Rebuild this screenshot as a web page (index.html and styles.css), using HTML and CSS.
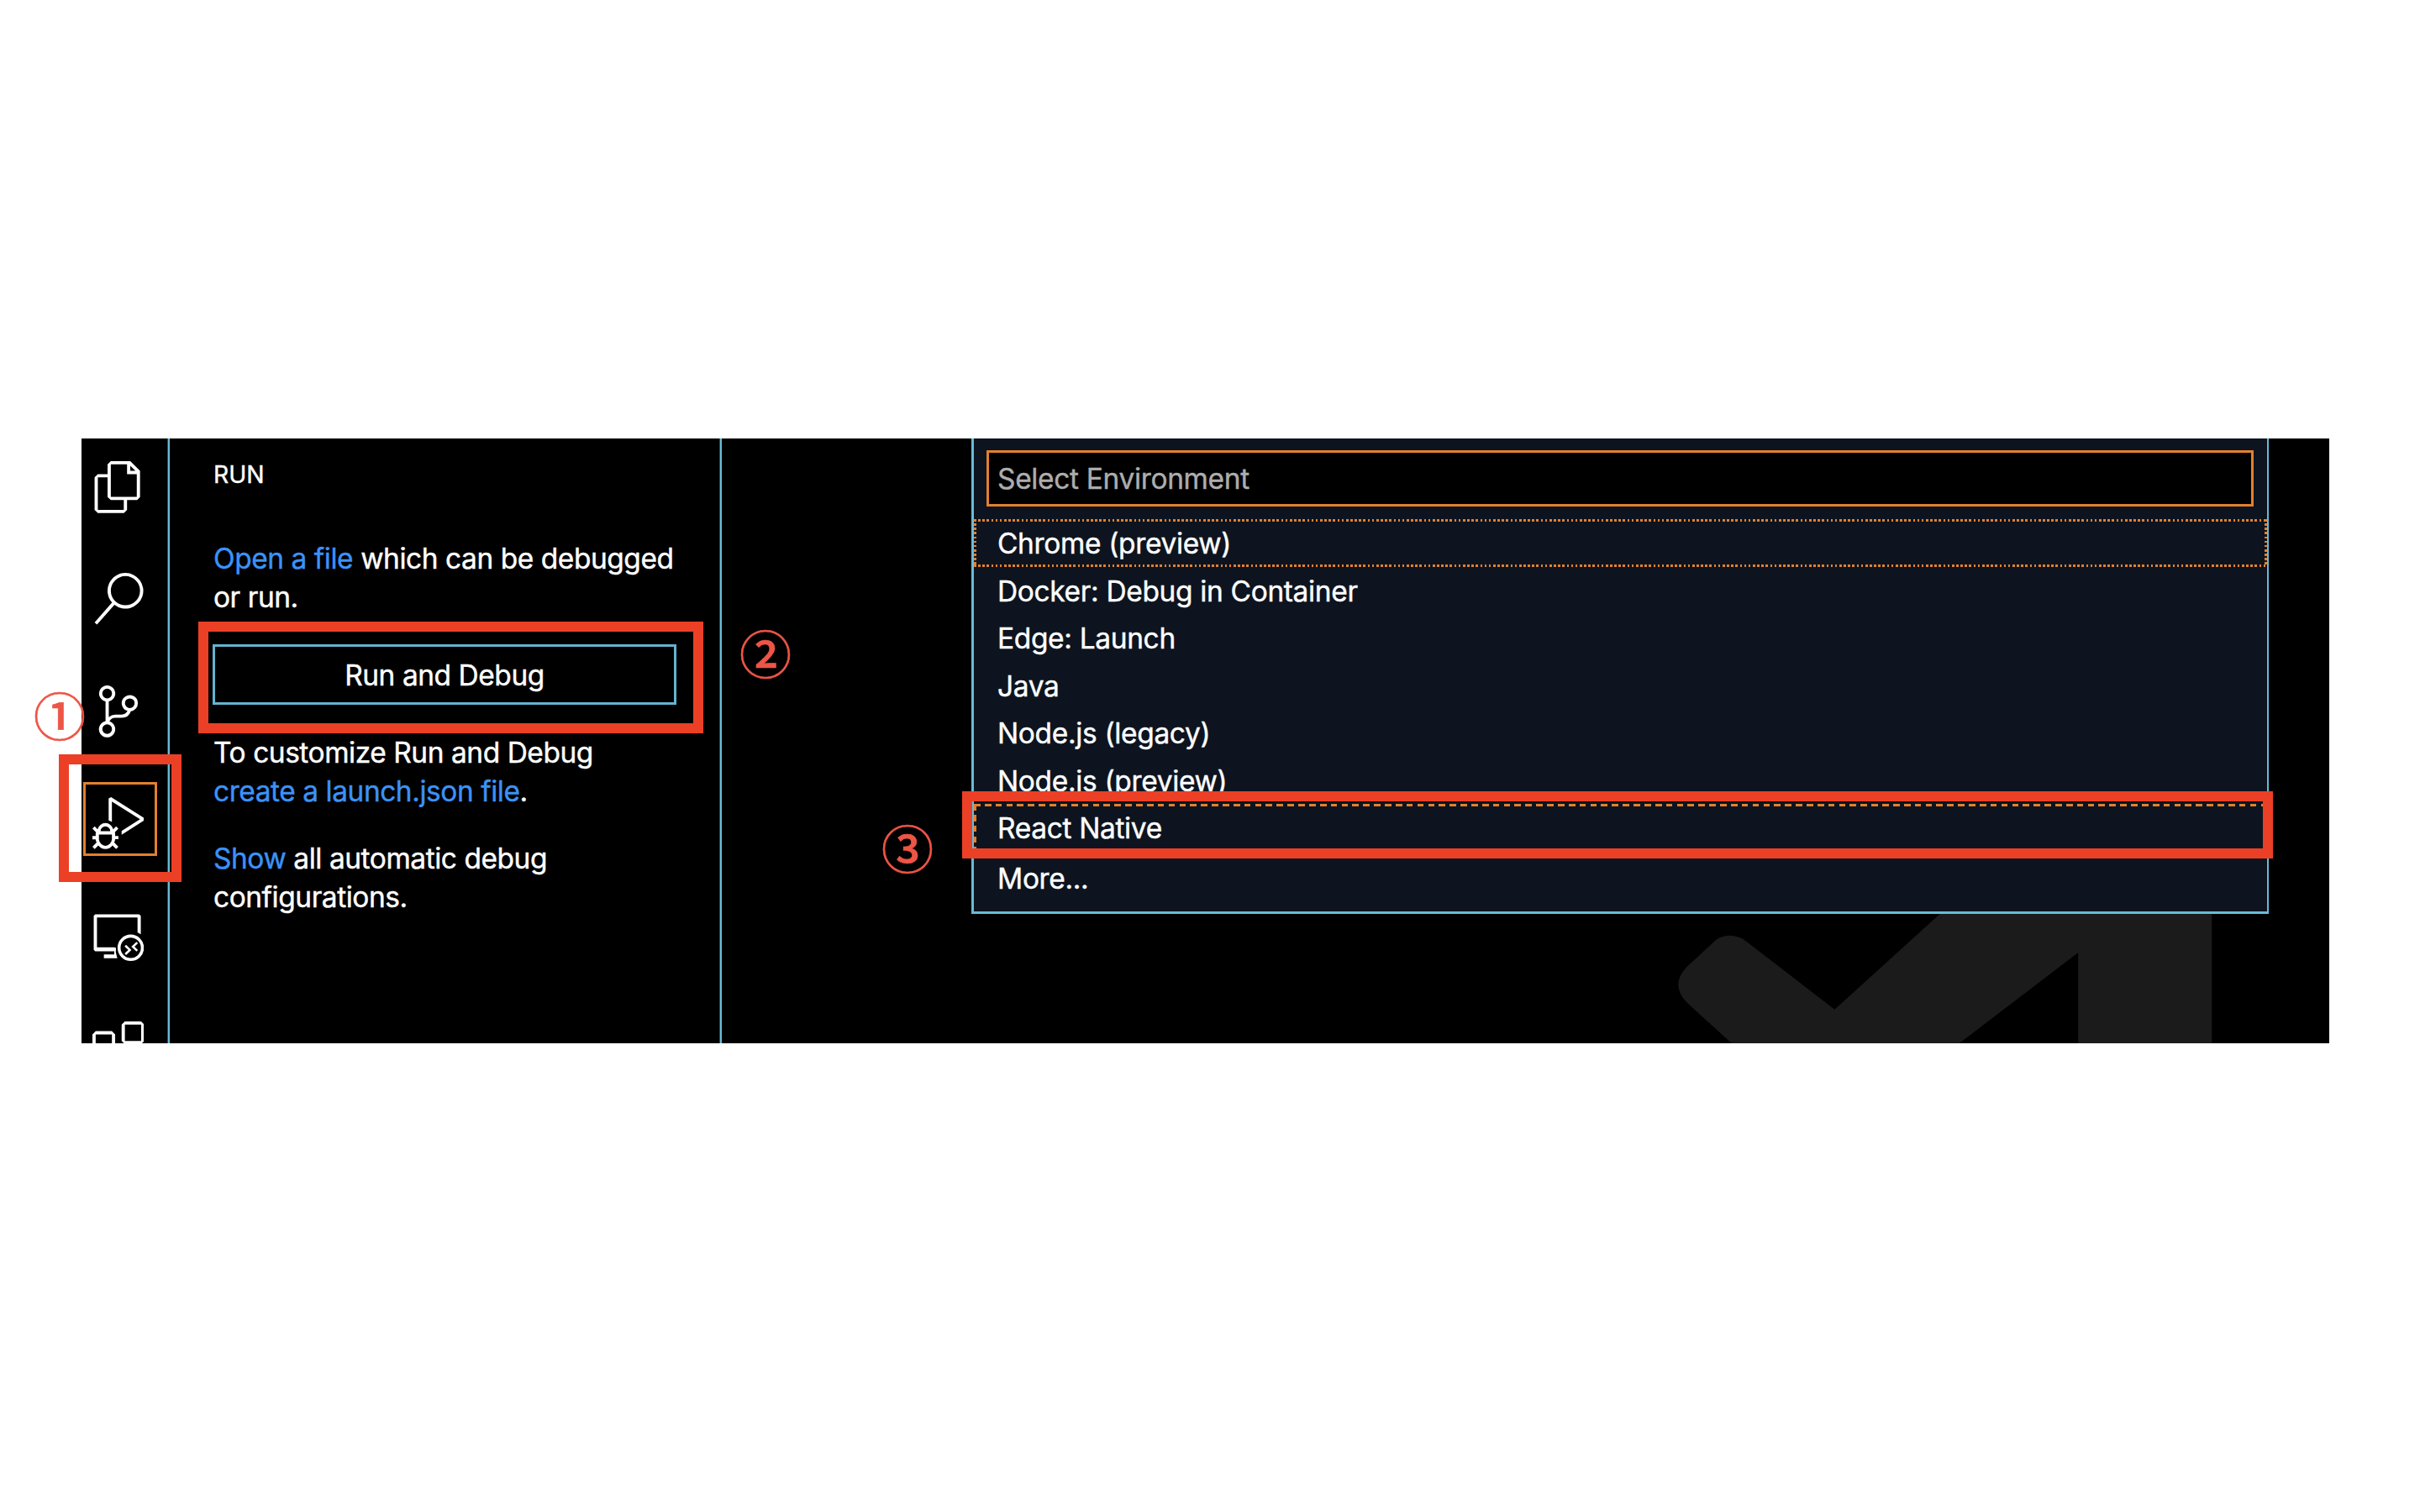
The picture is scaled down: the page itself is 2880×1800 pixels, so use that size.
FILE: index.html
```html
<!DOCTYPE html>
<html lang="en">
<head>
    <meta charset="UTF-8">
    <meta name="viewport" content="width=device-width, initial-scale=1.0">
    <title>Run and Debug - React Native</title>
    <link rel="stylesheet" href="styles.css">
</head>
<body>
    <main class="window">
        <nav class="activity-bar">
            <svg class="icon" viewBox="0 0 24 24"><path d="M17.5 0h-9L7 1.5V6H2.5L1 7.5v15.07L2.5 24h12.07L16 22.57V18h4.7l1.3-1.43V4.5L17.5 0zm0 2.12l2.38 2.38H17.5V2.12zm-3 20.38h-12v-15H7v9.07L8.5 18h6v4.5zm6-6h-12v-15H16V6h4.5v10.5z"/></svg>
            <svg class="icon" viewBox="0 0 24 24"><path d="M15.25 0a8.25 8.25 0 0 0-6.18 13.72L1 22.88l1.12 1 8.05-9.12A8.251 8.251 0 1 0 15.25.01V0zm0 15a6.75 6.75 0 1 1 0-13.5 6.75 6.75 0 0 1 0 13.5z"/></svg>
            <svg class="icon" viewBox="0 0 24 24"><path d="M21.007 8.222A3.738 3.738 0 0 0 15.045 5.2a3.737 3.737 0 0 0 1.156 6.583 2.988 2.988 0 0 1-2.668 1.67h-2.99a4.456 4.456 0 0 0-2.989 1.165V7.4a3.737 3.737 0 1 0-1.494 0v9.117a3.776 3.776 0 1 0 1.816.099 2.99 2.99 0 0 1 2.668-1.667h2.99a4.484 4.484 0 0 0 4.223-3.039 3.736 3.736 0 0 0 3.25-3.687zM4.565 3.738a2.242 2.242 0 1 1 4.484 0 2.242 2.242 0 0 1-4.484 0zm4.484 16.441a2.242 2.242 0 1 1-4.484 0 2.242 2.242 0 0 1 4.484 0zm8.221-9.715a2.242 2.242 0 1 1 0-4.485 2.242 2.242 0 0 1 0 4.485z"/></svg>
            <div class="active-item">
                <svg class="icon" viewBox="0 0 24 24"><path d="M10.94 13.5l-1.32 1.32a3.73 3.73 0 0 0-7.24 0L1.06 13.5 0 14.56l1.72 1.72-.22.22V18H0v1.5h1.5v.08c.077.489.214.966.41 1.42L0 22.94 1.06 24l1.65-1.65A4.308 4.308 0 0 0 6 24a4.31 4.31 0 0 0 3.29-1.65L10.94 24 12 22.94 10.09 21c.198-.464.336-.951.41-1.45v-.1H12V18h-1.5v-1.5l-.22-.22L12 14.56l-1.06-1.06zM6 13.5a2.25 2.25 0 0 1 2.25 2.25h-4.5A2.25 2.25 0 0 1 6 13.5zm3 6a3.33 3.33 0 0 1-3 3 3.33 3.33 0 0 1-3-3v-2.25h6v2.25zm14.76-9.9v1.26L13.5 17.37V15.6l8.5-5.37L9 2v9.46a5.07 5.07 0 0 0-1.5-.72V.63L8.64 0l15.12 9.6z"/></svg>
            </div>
            <svg class="icon" viewBox="0 0 24 24">
                <path d="M1.3 2.1h20.3l.75.75v8.5l-1.5-.9V3.6H2.1v13.8h8.2l-.3 1.8H1.3l-.7-.7V2.8z"/>
                <path d="M10 17.6h.9l-.1 2.1.7 2.7H5.3v-1.7h4.8z"/>
                <circle class="stroke" cx="17.7" cy="17.6" r="5.4"/>
                <path class="stroke thin" d="M15.2 16.6l2.1 2-2.1 2M20.7 15.2l-2 1.9 2 1.9"/>
            </svg>
            <svg class="icon" viewBox="0 0 24 24"><path d="M13.5 1.5L15 0h7.5L24 1.5V9l-1.5 1.5H15L13.5 9V1.5zm1.5 0V9h7.5V1.5H15zM0 15V6l1.5-1.5H9L10.5 6v7.5H18l1.5 1.5v7.5L18 24H1.5L0 22.5V15zm9-1.5V6H1.5v7.5H9zM9 15H1.5v7.5H9V15zm1.5 7.5H18V15h-7.5v7.5z"/></svg>
        </nav>

        <aside class="sidebar">
            <h2>RUN</h2>
            <p><a>Open a file</a> which can be debugged<br>or run.</p>
            <button class="run-button">Run and Debug</button>
            <p>To customize Run and Debug<br><a>create a launch.json file</a>.</p>
            <p class="show"><a>Show</a> all automatic debug<br>configurations.</p>
        </aside>

        <section class="editor">
            <svg class="watermark" viewBox="1990 1080 650 162">
                <path d="M2308.7 1088L2183.4 1201.7L2075 1118.3Q2058 1109 2043 1118.3L2008 1150.5Q1987 1171.7 2007 1193L2060.7 1242H2331.8L2473.2 1134V1242H2632.3V1080H2317.5z"/>
            </svg>
            <div class="quick-pick">
                <div class="input">Select Environment</div>
                <ul>
                    <li class="focused">Chrome (preview)</li>
                    <li>Docker: Debug in Container</li>
                    <li>Edge: Launch</li>
                    <li>Java</li>
                    <li>Node.js (legacy)</li>
                    <li>Node.js (preview)</li>
                    <li class="hovered">React Native</li>
                    <li class="more">More...</li>
                </ul>
            </div>
        </section>
    </main>

    <!-- numbered steps -->
    <div class="mark mark-1"></div>
    <div class="mark mark-2"></div>
    <div class="mark mark-3"></div>
    <span class="step step-1">①</span>
    <span class="step step-2">②</span>
    <span class="step step-3">③</span>
</body>
</html>
```

FILE: styles.css
```css
* {
    margin: 0;
    padding: 0;
    box-sizing: border-box;
}

body {
    width: 2880px;
    height: 1800px;
    padding: 522px 0 0 97px;
    background-color: #fff;
    color: #fff;
    font-family: Inter, "Liberation Sans", sans-serif;
    font-size: 33.46px;
    position: relative;
    overflow: hidden;
}

.window {
    display: flex;
    width: 2675px;
    height: 720px;
    background-color: #000;
    overflow: hidden;
    -webkit-text-stroke: 0.4px;
}

.activity-bar {
    display: flex;
    flex-direction: column;
    flex: none;
    gap: 71.7px;
    width: 105px;
    padding: 27px 0 0 12.7px;
    border-right: 2px solid #68bbd7;
    box-shadow: inset -1px 0 #2b4f5b;
}

.icon {
    display: block;
    flex: none;
    width: 61.8px;
    height: 61.8px;
    fill: #fff;
}

.icon .stroke {
    fill: none;
    stroke: #fff;
    stroke-width: 1.4;
}

.icon .thin {
    stroke-width: 1;
}

.active-item {
    position: relative;
}

.active-item::before {
    content: '';
    position: absolute;
    left: -10.7px;
    top: -18.5px;
    width: 82px;
    height: 82px;
    border: 3px solid #e2802e;
}

.sidebar {
    flex: none;
    width: 657px;
    padding: 30px 0 0 52px;
    border-right: 2px solid #68bbd7;
    box-shadow: inset -1px 0 #2b4f5b;
    letter-spacing: -0.44px;
    line-height: 46.4px;
    white-space: nowrap;
}

.sidebar h2 {
    height: 90px;
    font-size: 28.3px;
    font-weight: 400;
    letter-spacing: 0;
    line-height: 27px;
}

.sidebar a {
    color: #3b92f7;
}

.run-button {
    display: block;
    width: 552px;
    height: 72px;
    margin: 32px 0 34px -1px;
    padding-top: 2px;
    background-color: #000;
    border: 3px solid #63b3cf;
    color: #fff;
    font-family: inherit;
    font-size: inherit;
    letter-spacing: inherit;
}

.show {
    margin-top: 33px;
}

.editor {
    position: relative;
    flex: 1;
    padding-left: 297px;
}

.watermark {
    position: absolute;
    left: 1131px;
    top: 558px;
    width: 650px;
    height: 162px;
    fill: #1b1b1b;
}

.quick-pick {
    position: relative;
    width: 1544px;
    height: 566px;
    padding-top: 14px;
    background-color: #0d141f;
    border: solid #68bbd7;
    border-width: 0 2px 3px 3px;
    letter-spacing: -0.33px;
}

.input {
    width: 1508px;
    height: 67px;
    margin-left: 15px;
    padding-left: 10px;
    background-color: #000;
    border: 3px solid #e2802e;
    color: #adadad;
    line-height: 63px;
}

ul {
    margin-top: 15px;
    list-style: none;
}

li {
    height: 56.5px;
    padding-left: 28px;
    line-height: 59px;
    white-space: nowrap;
}

/* focus and hover outlines of the list rows */
.focused,
.hovered {
    --on: 2.6px;
    --gap: 5.15px;
    --x: repeating-linear-gradient(90deg, #e2802e 0 var(--on), transparent var(--on) var(--gap));
    --y: repeating-linear-gradient(180deg, #e2802e 0 var(--on), transparent var(--on) var(--gap));
    background-image: var(--x), var(--x), var(--y), var(--y);
    background-position: left top, left bottom, left top, right top;
    background-size: 100% 3px, 100% 3px, 3px 100%, 3px 100%;
    background-repeat: no-repeat;
}

.hovered {
    --on: 7.7px;
    --gap: 12.87px;
}

.more {
    margin-top: 3px;
}

.mark {
    position: absolute;
    border: 12px solid #eb4026;
}

.mark-1 {
    left: 70px;
    top: 898px;
    width: 146px;
    height: 152px;
}

.mark-2 {
    left: 236px;
    top: 740px;
    width: 601px;
    height: 133px;
}

.mark-3 {
    left: 1145px;
    top: 942px;
    width: 1560px;
    height: 80px;
}

.step {
    position: absolute;
    width: 64px;
    height: 64px;
    color: #ed5546;
    font-family: "Noto Sans CJK JP", sans-serif;
    font-size: 62px;
    font-weight: 500;
    line-height: 64px;
    text-align: center;
    -webkit-text-stroke: 0.6px;
}

.step-1 {
    left: 39px;
    top: 818px;
}

.step-2 {
    left: 879px;
    top: 744px;
}

.step-3 {
    left: 1048px;
    top: 976px;
}
```
